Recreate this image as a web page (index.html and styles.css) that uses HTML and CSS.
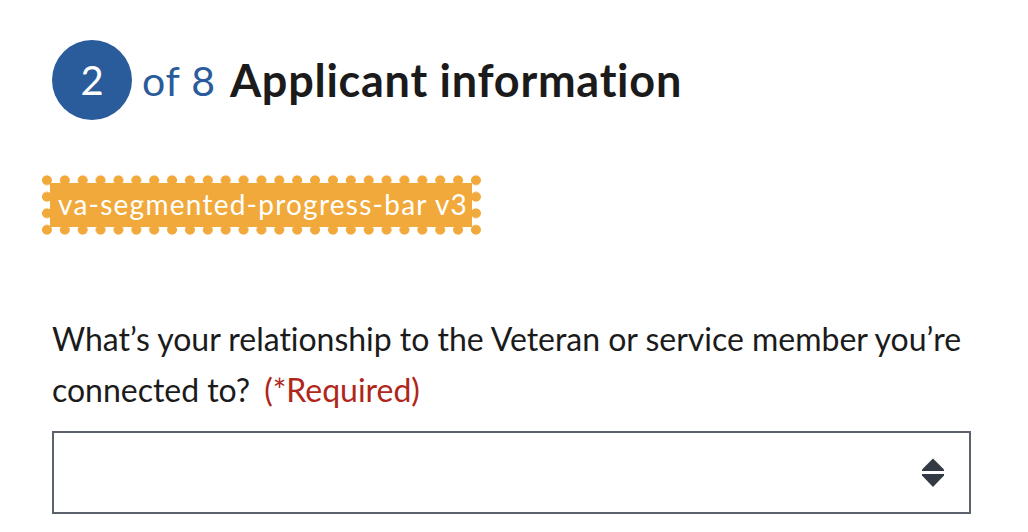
FILE: index.html
```html
<!DOCTYPE html>
<html lang="en">
<head>
<meta charset="utf-8">
<title>Applicant information</title>
<link rel="stylesheet" href="styles.css">
</head>
<body>
<main class="page">
  <h2 class="progress-heading">
    <span class="step-circle">2</span>
    <span class="step-of">of 8</span>
    <span class="step-title">Applicant information</span>
  </h2>
  <div class="badge-row">
    <span class="stamp">va-segmented-progress-bar v3</span>
  </div>
  <label class="question" for="rel">What’s your relationship to the Veteran or service member you’re connected to? <span class="required">(*Required)</span></label>
  <div class="select">
    <select id="rel" class="select-input"><option></option></select>
    <svg class="select-icon" width="24" height="30" viewBox="0 0 24 30" aria-hidden="true">
      <path d="M12 0.5 L23 11.5 L23 13 L1 13 L1 11.5 Z" fill="#343a44"/>
      <path d="M1 16 L23 16 L23 17.5 L12 29 L1 17.5 Z" fill="#343a44"/>
    </svg>
  </div>
</main>
</body>
</html>
```
FILE: styles.css
```css
html, body {
  margin: 0;
  padding: 0;
  background: #ffffff;
}
body {
  font-family: "Lato", "Open Sans", sans-serif;
  color: #1b1b1b;
}
.page {
  padding: 40px 0 0 52px;
  width: 919px;
}
.progress-heading {
  display: flex;
  align-items: center;
  margin: 0;
  height: 80px;
}
.step-circle {
  display: flex;
  align-items: center;
  justify-content: center;
  width: 80px;
  height: 80px;
  border-radius: 50%;
  background: #2a5b9b;
  color: #ffffff;
  font-weight: 400;
  font-size: 40px;
}
.step-of {
  color: #2a5b9b;
  font-weight: 400;
  font-size: 41px;
  margin-left: 10px;
  letter-spacing: 0.8px;
}
.step-title {
  font-weight: 700;
  font-size: 45px;
  margin-left: 14px;
  letter-spacing: 0.75px;
}
.badge-row {
  padding: 63px 0 0 0;
  height: 80px;
  box-sizing: border-box;
}
.stamp {
  position: relative;
  display: inline-block;
  margin-left: -2px;
  padding: 0 4px 0 8px;
  height: 44px;
  line-height: 43px;
  background: #f1a93b;
  color: #ffffff;
  font-size: 28px;
  letter-spacing: 1.25px;
  z-index: 0;
}
.stamp::before {
  content: "";
  position: absolute;
  top: -11px;
  bottom: -11px;
  left: -12.5px;
  right: -12.5px;
  background: radial-gradient(circle, #f1a93b 4.6px, transparent 5.2px) 0 0 / 18px 16px round;
  z-index: -1;
}
.question {
  display: block;
  margin-top: 113px;
  font-size: 32px;
  line-height: 51px;
  letter-spacing: -0.02px;
}
.required {
  color: #b0261a;
  margin-left: 6px;
}
.select {
  position: relative;
  margin-top: 16px;
  height: 83px;
  border: 2px solid #5c626c;
  box-sizing: border-box;
}
.select-input {
  appearance: none;
  width: 100%;
  height: 100%;
  border: 0;
  background: transparent;
  font: inherit;
}
.select-icon {
  position: absolute;
  right: 24px;
  top: 25px;
  pointer-events: none;
}
```
